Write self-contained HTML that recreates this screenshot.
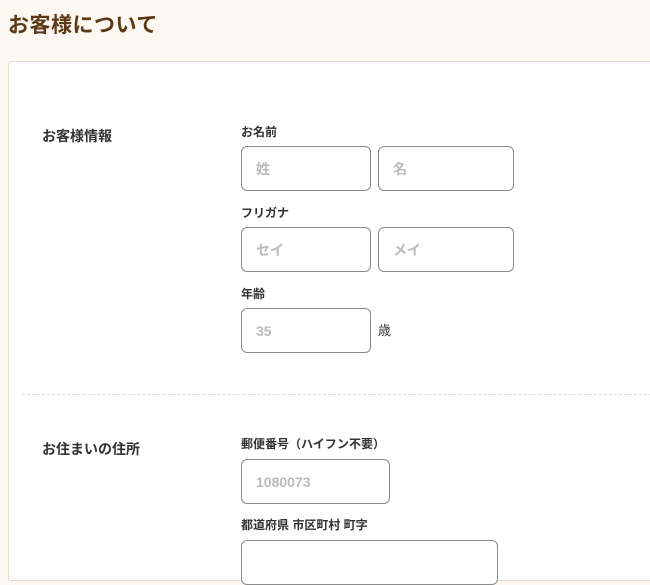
<!DOCTYPE html>
<html><head><meta charset="utf-8"><style>
*{margin:0;padding:0;box-sizing:border-box}
body{width:650px;height:549px;overflow:hidden;background:#fdf8f1;font-family:"Liberation Sans","Noto Sans CJK JP",sans-serif;position:relative}
.t{position:absolute;left:8px;top:9px;font-size:21px;font-weight:bold;color:#5b3816;letter-spacing:0.5px}
.card{position:absolute;left:8px;top:61px;width:660px;height:520px;background:#fff;border:1px solid #e6dccf;border-radius:3px}
.a{position:absolute;color:#333;font-weight:bold}
.sec{font-size:14px}
.lb{font-size:12px}
.in{position:absolute;border:1px solid #8a8a8a;border-radius:6px;background:#fff;color:#bbb;font-size:14px;font-weight:bold;padding-left:14px;display:flex;align-items:center}
.dash{position:absolute;left:22px;top:394px;width:640px;border-top:1px dashed #e4d8cc}
</style></head><body>
<div class="t">お客様について</div>
<div class="card"></div>
<div class="a sec" style="left:42px;top:126px">お客様情報</div>
<div class="a lb" style="left:241px;top:123px">お名前</div>
<div class="in" style="left:241px;top:146px;width:130px;height:45px">姓</div>
<div class="in" style="left:378px;top:146px;width:136px;height:45px">名</div>
<div class="a lb" style="left:241px;top:204px">フリガナ</div>
<div class="in" style="left:241px;top:227px;width:130px;height:45px">セイ</div>
<div class="in" style="left:378px;top:227px;width:136px;height:45px">メイ</div>
<div class="a lb" style="left:241px;top:285px">年齢</div>
<div class="in" style="left:241px;top:308px;width:130px;height:45px">35</div>
<div class="a" style="left:378px;top:320px;font-size:13px;font-weight:normal">歳</div>
<div class="dash"></div>
<div class="a sec" style="left:42px;top:439px">お住まいの住所</div>
<div class="a lb" style="left:241px;top:435px">郵便番号（ハイフン不要）</div>
<div class="in" style="left:241px;top:459px;width:149px;height:45px">1080073</div>
<div class="a lb" style="left:241px;top:516px">都道府県 市区町村 町字</div>
<div class="in" style="left:241px;top:540px;width:257px;height:45px"></div>
</body></html>
